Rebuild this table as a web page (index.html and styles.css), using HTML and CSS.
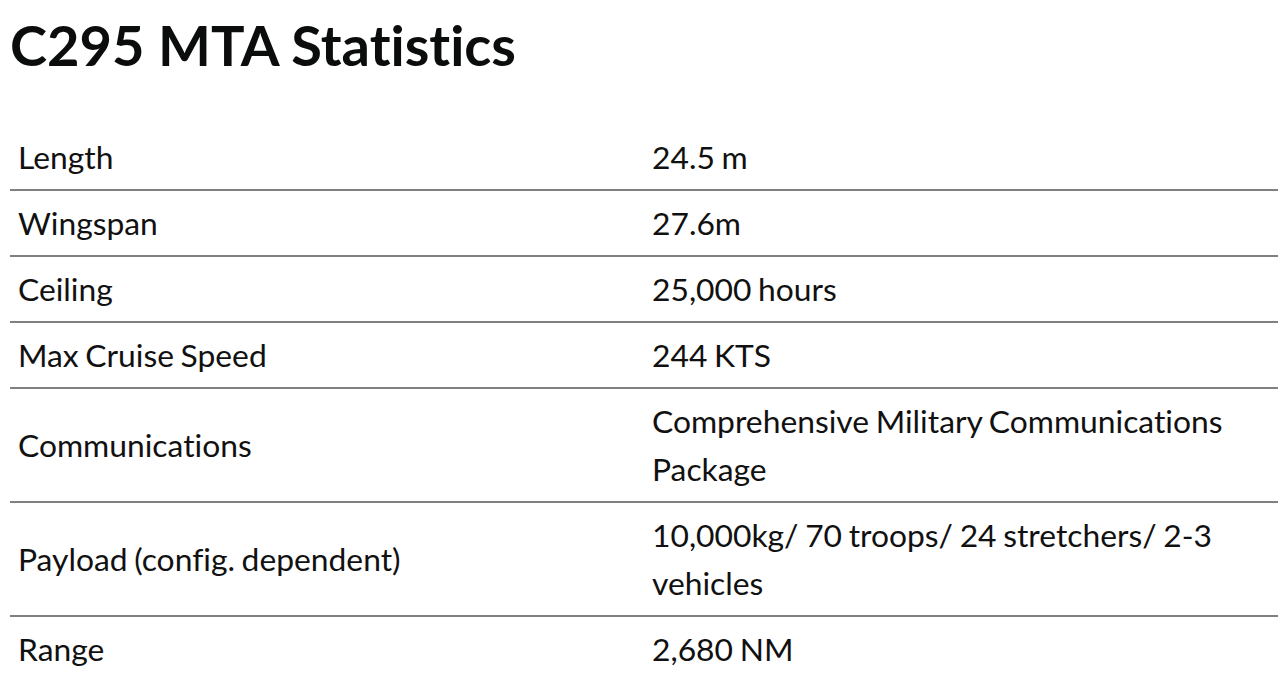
FILE: index.html
```html
<!DOCTYPE html>
<html>
<head>
<meta charset="utf-8">
<link rel="stylesheet" href="styles.css">
</head>
<body>
<h1 class="title">C295 MTA Statistics</h1>
<table class="stats">
<tr><td>Length</td><td>24.5 m</td></tr>
<tr><td>Wingspan</td><td>27.6m</td></tr>
<tr><td>Ceiling</td><td>25,000 hours</td></tr>
<tr><td>Max Cruise Speed</td><td>244 KTS</td></tr>
<tr><td>Communications</td><td>Comprehensive Military Communications Package</td></tr>
<tr><td>Payload (config. dependent)</td><td>10,000kg/ 70 troops/ 24 stretchers/ 2-3 vehicles</td></tr>
<tr><td>Range</td><td>2,680 NM</td></tr>
</table>
</body>
</html>
```
FILE: styles.css
```css
html, body {
  margin: 0;
  padding: 0;
  background: #fff;
}
body {
  padding: 0 10px;
  font-family: Lato, "Open Sans", sans-serif;
  color: #111;
  font-variant-ligatures: no-common-ligatures;
}
.title {
  font-size: 56px;
  font-weight: 700;
  line-height: 1;
  margin: 17px 0 52px;
  color: #0b0d0c;
}
.stats {
  width: 100%;
  border-collapse: collapse;
  table-layout: fixed;
  font-size: 31.8px;
  line-height: 48px;
  word-spacing: -1.5px;
}
.stats td {
  padding: 8px 8px;
  border-bottom: 2px solid #808080;
  vertical-align: middle;
  width: 50%;
}
.stats tr:last-child td {
  border-bottom: none;
}
```
